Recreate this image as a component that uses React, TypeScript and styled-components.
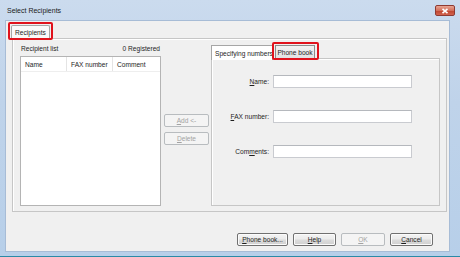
import styled, { createGlobalStyle } from "styled-components"
import React from "react"

const Global = createGlobalStyle`
  html, body { margin: 0; padding: 0; background: #ffffff; }
  * { box-sizing: border-box; }
  body { font-family: "Liberation Sans", Arial, sans-serif; font-size: 6.6px; color: #1e1e1e; }
`

const App = () => {
  return (
    <>
      <Global />
      <Window>
        <TitleBar>
          <Title>Select Recipients</Title>
          <CloseBtn>
            <svg width="8" height="6" viewBox="0 0 8 6">
              <path d="M1.5 0.8 L6.5 5.2 M6.5 0.8 L1.5 5.2" stroke="#ffffff" strokeWidth="1.6" />
            </svg>
          </CloseBtn>
        </TitleBar>
        <Client>
          <TabRow>
            <Highlight>
              <TopTab>Recipients</TopTab>
            </Highlight>
          </TabRow>
          <MainPanel>
            <ListColumn>
              <ListCaption>
                <span>Recipient list</span>
                <span>0 Registered</span>
              </ListCaption>
              <ListBox>
                <ListHeader>
                  <HeaderCell w={46}>Name</HeaderCell>
                  <HeaderCell w={46}>FAX number</HeaderCell>
                  <HeaderCell w={46} last>Comment</HeaderCell>
                </ListHeader>
              </ListBox>
            </ListColumn>
            <MiddleColumn>
              <Button disabled w={45}><u>A</u>dd &lt;-</Button>
              <Button disabled w={45}><u>D</u>elete</Button>
            </MiddleColumn>
            <SubTabs>
              <SubTabRow>
                <ActiveTab>Specifying numbers</ActiveTab>
                <Highlight small>
                  <PlainTab>Phone book</PlainTab>
                </Highlight>
              </SubTabRow>
              <SubPanel>
                <FormRow>
                  <FieldLabel><u>N</u>ame:</FieldLabel>
                  <Field />
                </FormRow>
                <FormRow>
                  <FieldLabel><u>F</u>AX number:</FieldLabel>
                  <Field />
                </FormRow>
                <FormRow>
                  <FieldLabel>Com<u>m</u>ents:</FieldLabel>
                  <Field />
                </FormRow>
              </SubPanel>
            </SubTabs>
          </MainPanel>
          <ButtonRow>
            <Button w={51}><u>P</u>hone book...</Button>
            <Button w={43}><u>H</u>elp</Button>
            <Button w={44} disabled><u>O</u>K</Button>
            <Button w={43}><u>C</u>ancel</Button>
          </ButtonRow>
        </Client>
      </Window>
    </>
  )
}

export default App

const Window = styled.div`
  width: 460px;
  height: 257px;
  display: flex;
  flex-direction: column;
  padding: 0 10px 4px 5px;
  background: linear-gradient(180deg, #cbdbee 0%, #bfd3ea 40%, #b7cfe9 100%);
  border-bottom: 1px solid #2b8aa6;
`

const TitleBar = styled.div`
  height: 20px;
  display: flex;
  align-items: center;
  justify-content: space-between;
  padding: 2px 0 0 2px;
  margin-right: -5px;
`

const Title = styled.div`
  font-size: 7px;
  color: #1b1b1b;
  margin-top: -1px;
`

const CloseBtn = styled.div`
  width: 20px;
  height: 11px;
  display: flex;
  align-items: center;
  justify-content: center;
  border: 1px solid #8e3a32;
  border-radius: 2px;
  background: linear-gradient(180deg, #e8a493 0%, #d3705c 50%, #c0452f 55%, #d2634e 100%);
  margin-top: -1px;
`

const Client = styled.div`
  flex: 1;
  display: flex;
  flex-direction: column;
  background: #f0f0f0;
  border: 1px solid #a7bcd6;
  padding: 1px 2px 0 0;
`

const TabRow = styled.div`
  display: flex;
  padding-left: 2px;
  position: relative;
  z-index: 1;
`

const Highlight = styled.div<{ small?: boolean }>`
  border: 2px solid #e0121c;
  border-radius: 2px;
  padding: ${p => (p.small ? "1px 2px 0 1px" : "1px 1px 0 1px")};
  margin-bottom: -2px;
  margin-left: ${p => (p.small ? "-1px" : "0")};
  display: flex;
`

const TopTab = styled.div`
  width: 39px;
  height: 13px;
  display: flex;
  align-items: center;
  justify-content: center;
  background: #f9f9f9;
  border: 1px solid #a6a6a6;
  border-bottom: none;
  border-radius: 2px 2px 0 0;
`

const MainPanel = styled.div`
  margin-left: 6px;
  height: 174px;
  display: flex;
  border: 1px solid #c6c6c6;
  box-shadow: inset 1px 1px 0 #ffffff;
  padding: 0 6px 5px 7px;
`

const ListColumn = styled.div`
  width: 141px;
  display: flex;
  flex-direction: column;
`

const ListCaption = styled.div`
  height: 17px;
  display: flex;
  align-items: center;
  justify-content: space-between;
  padding: 1px 1px 0 1px;
`

const ListBox = styled.div`
  flex: 1;
  background: #ffffff;
  border: 1px solid #b4b4b4;
`

const ListHeader = styled.div`
  height: 15px;
  display: flex;
  border-bottom: 1px solid #eeeeee;
`

const HeaderCell = styled.div<{ w: number; last?: boolean }>`
  width: ${p => p.w}px;
  display: flex;
  align-items: center;
  padding-left: 4px;
  border-right: ${p => (p.last ? "none" : "1px solid #e4e4e4")};
`

const MiddleColumn = styled.div`
  width: 45px;
  margin: 0 2px 0 3px;
  padding-top: 75px;
  display: flex;
  flex-direction: column;
  gap: 5px;
`

const Button = styled.div<{ w: number; disabled?: boolean }>`
  width: ${p => p.w}px;
  height: 13px;
  display: flex;
  align-items: center;
  justify-content: center;
  border: 1px solid ${p => (p.disabled ? "#b8bcbf" : "#707070")};
  border-radius: 2px;
  color: ${p => (p.disabled ? "#a3a3a3" : "#1e1e1e")};
  background: ${p =>
    p.disabled
      ? "#f4f4f4"
      : "linear-gradient(180deg, #f4f4f4 0%, #ebebeb 48%, #dcdcdc 52%, #d0d0d0 100%)"};
  box-shadow: inset 0 0 0 1px ${p => (p.disabled ? "#f4f4f4" : "#fbfbfb")};
`

const SubTabs = styled.div`
  flex: 1;
  display: flex;
  flex-direction: column;
  padding-top: 3px;
`

const SubTabRow = styled.div`
  display: flex;
  align-items: flex-end;
  position: relative;
  z-index: 1;
`

const ActiveTab = styled.div`
  width: 62px;
  height: 15px;
  display: flex;
  align-items: center;
  padding-left: 3px;
  white-space: nowrap;
  overflow: hidden;
  background: #ffffff;
  border: 1px solid #a6a6a6;
  border-bottom: none;
  margin-bottom: -2px;
`

const PlainTab = styled.div`
  width: 40px;
  height: 13px;
  display: flex;
  align-items: center;
  justify-content: center;
  background: linear-gradient(180deg, #f2f2f2 0%, #e2e2e2 100%);
  border: 1px solid #8c8c8c;
  border-bottom: none;
`

const SubPanel = styled.div`
  flex: 1;
  display: flex;
  flex-direction: column;
  gap: 22px;
  padding-top: 16px;
  border: 1px solid #c6c6c6;
  box-shadow: inset 1px 1px 0 #ffffff;
`

const FormRow = styled.div`
  display: flex;
  align-items: center;
  gap: 4px;
`

const FieldLabel = styled.div`
  width: 57px;
  text-align: right;
`

const Field = styled.div`
  width: 139px;
  height: 13px;
  background: #ffffff;
  border: 1px solid #c9cbd0;
  border-top-color: #b5b8bd;
`

const ButtonRow = styled.div`
  display: flex;
  justify-content: flex-end;
  gap: 5px;
  margin-top: 21px;
  padding-right: 14px;
`
